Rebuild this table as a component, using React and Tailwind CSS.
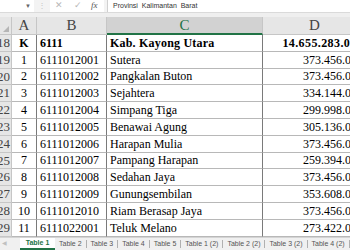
const rows = [
  ["18", "K", "6111", "Kab. Kayong Utara", "14.655.283.000", true],
  ["19", "1", "6111012001", "Sutera", "373.456.000"],
  ["20", "2", "6111012002", "Pangkalan Buton", "373.456.000"],
  ["21", "3", "6111012003", "Sejahtera", "334.144.000"],
  ["22", "4", "6111012004", "Simpang Tiga", "299.998.000"],
  ["23", "5", "6111012005", "Benawai Agung", "305.136.000"],
  ["24", "6", "6111012006", "Harapan Mulia", "373.456.000"],
  ["25", "7", "6111012007", "Pampang Harapan", "259.394.000"],
  ["26", "8", "6111012008", "Sedahan Jaya", "373.456.000"],
  ["27", "9", "6111012009", "Gunungsembilan", "353.608.000"],
  ["28", "10", "6111012010", "Riam Berasap Jaya", "373.456.000"],
  ["29", "11", "6111022001", "Teluk Melano", "273.422.000"],
];

const tabs = ["Table 2", "Table 3", "Table 4", "Table 5", "Table 1 (2)", "Table 2 (2)", "Table 3 (2)", "Table 4 (2)"];

const serif = "font-['Liberation_Serif',serif]";

export default function App() {
  return (
    <div className="w-[350px] h-[250px] overflow-hidden bg-white flex flex-col font-['Liberation_Sans',sans-serif]">
      {/* Formula bar */}
      <div className="h-[13px] flex items-stretch bg-[#f3f3f3] border-b border-[#dadada]">
        <div className="w-[34px] bg-white flex items-center justify-end pr-[3px] text-[6px] text-[#666]">▼</div>
        <div className="w-[16px] flex items-center justify-center text-[8px] text-[#c4c4c4]">⋮</div>
        <div className="w-[54px] bg-white flex items-center text-[9px]">
          <span className="ml-[5px] text-[#b8b8b8]">✕</span>
          <span className="ml-[11px] text-[#b8b8b8]">✓</span>
          <span className={`ml-[9px] italic text-[#555] ${serif}`}>fx</span>
        </div>
        <div className="w-[3px]" />
        <div className="flex-1 bg-white border-l border-[#d0d0d0] flex items-center pl-[5px] text-[7px] text-[#333] whitespace-nowrap">
          Provinsi&nbsp; Kalimantan&nbsp; Barat
        </div>
      </div>
      <div className="h-[4px] bg-[#efefef]" />

      {/* Grid */}
      <div className={`grid grid-cols-[12px_25px_70px_156px_103px] w-[366px] ${serif}`}>
        {/* column headers */}
        <div className="h-[18px] bg-[#e6e6e6] border-r border-b border-[#c6c6c6] flex items-end justify-end">
          <div className="w-0 h-0 mr-[2px] mb-[2px] border-l-[6px] border-l-transparent border-b-[6px] border-b-[#b5b5b5]" />
        </div>
        <div className="h-[18px] bg-[#e6e6e6] border-r border-b border-[#c6c6c6] flex items-center justify-center text-[15px] text-[#444]">A</div>
        <div className="h-[18px] bg-[#e6e6e6] border-r border-b border-[#c6c6c6] flex items-center justify-center text-[15px] text-[#444]">B</div>
        <div className="h-[18px] bg-[#d2d2d2] border-r border-[#c6c6c6] border-b-2 border-b-[#217346] flex items-center justify-center text-[15px] text-[#217346]">C</div>
        <div className="h-[18px] bg-[#e6e6e6] border-b border-[#c6c6c6] flex items-center justify-center text-[15px] text-[#444]">D</div>

        {rows.map(([n, a, b, c, d, bold]) => (
          <div key={n} className="contents">
            <div className="h-[16.8px] bg-[#e6e6e6] border-r border-b border-[#c6c6c6] flex items-center justify-end overflow-hidden pr-[1px] text-[13px] text-[#444]">
              {n}
            </div>
            <div className={`h-[16.8px] border-r border-b border-r-[#7a7a7a] border-b-[#b8b8b8] flex items-center justify-center text-[12px] text-black ${bold ? "font-bold" : ""}`}>
              {a}
            </div>
            <div className={`h-[16.8px] border-r border-b border-r-[#7a7a7a] border-b-[#b8b8b8] flex items-center pl-[3px] text-[12px] text-black ${bold ? "font-bold" : ""}`}>
              {b}
            </div>
            <div className={`h-[16.8px] border-r border-b border-r-[#7a7a7a] border-b-[#b8b8b8] flex items-center pl-[3px] text-[12px] text-black whitespace-nowrap ${bold ? "font-bold tracking-[0.2px]" : ""}`}>
              {c}
            </div>
            <div className={`h-[16.8px] border-b border-b-[#b8b8b8] flex items-center justify-end pr-[3px] text-[12px] text-black ${bold ? "font-bold tracking-[0.4px]" : ""}`}>
              {d}
            </div>
          </div>
        ))}
      </div>

      {/* Sheet tabs */}
      <div className="flex-1 flex items-stretch bg-[#f0f0f0] border-t border-[#d4d4d4] text-[7px] text-[#555] whitespace-nowrap">
        <div className="w-[20px] flex items-center pl-[2px] text-[6px] text-[#c0c0c0]">◀</div>
        <div className="w-[35px] bg-white flex items-center justify-center font-bold text-[#217346] border-b-2 border-[#217346]">Table 1</div>
        {tabs.map((t) => (
          <div key={t} className="flex items-center">
            <span className="px-[4px]">{t}</span>
            <span className="w-px h-[8px] bg-[#b0b0b0]" />
          </div>
        ))}
      </div>
    </div>
  );
}
